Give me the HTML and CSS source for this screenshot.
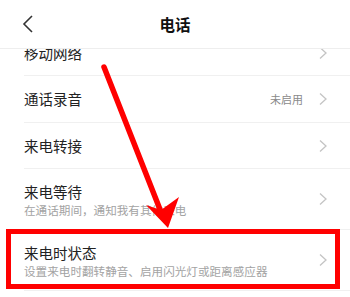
FILE: index.html
```html
<!DOCTYPE html>
<html lang="zh-CN">
<head>
<meta charset="utf-8">
<title>电话</title>
<link rel="stylesheet" href="styles.css">
</head>
<body>
<div class="screen">
  <header class="header">
    <svg class="back" width="12" height="18" viewBox="0 0 12 18"><polyline points="10,1 2,9 10,17" fill="none" stroke="#333" stroke-width="1.6"/></svg>
    <h1 class="title">电话</h1>
  </header>
  <div class="viewport">
    <ul class="list">
      <li class="row">
        <div class="text"><div class="label">移动网络</div></div>
        <svg class="chev" width="8" height="12" viewBox="0 0 8 12"><polyline points="1,0.5 7,6 1,11.5" fill="none" stroke="#c4c4c4" stroke-width="1.3"/></svg>
      </li>
      <li class="row row-mid">
        <div class="text"><div class="label">通话录音</div></div>
        <span class="value">未启用</span>
        <svg class="chev" width="8" height="12" viewBox="0 0 8 12"><polyline points="1,0.5 7,6 1,11.5" fill="none" stroke="#c4c4c4" stroke-width="1.3"/></svg>
      </li>
      <li class="row">
        <div class="text"><div class="label">来电转接</div></div>
        <svg class="chev" width="8" height="12" viewBox="0 0 8 12"><polyline points="1,0.5 7,6 1,11.5" fill="none" stroke="#c4c4c4" stroke-width="1.3"/></svg>
      </li>
      <li class="row row-tall">
        <div class="text"><div class="label">来电等待</div><div class="sub">在通话期间，通知我有其他来电</div></div>
        <svg class="chev" width="8" height="12" viewBox="0 0 8 12"><polyline points="1,0.5 7,6 1,11.5" fill="none" stroke="#c4c4c4" stroke-width="1.3"/></svg>
      </li>
      <li class="row row-tall">
        <div class="text"><div class="label">来电时状态</div><div class="sub">设置来电时翻转静音、启用闪光灯或距离感应器</div></div>
        <svg class="chev" width="8" height="12" viewBox="0 0 8 12"><polyline points="1,0.5 7,6 1,11.5" fill="none" stroke="#c4c4c4" stroke-width="1.3"/></svg>
      </li>
    </ul>
  </div>
  <div class="highlight"></div>
  <svg class="arrow" width="350" height="297" viewBox="0 0 350 297">
    <line x1="104" y1="67" x2="161" y2="212" stroke="#ff0000" stroke-width="5.5" stroke-linecap="round"/>
    <polygon points="168,228 146,205 161,210 179,197" fill="#ff0000"/>
  </svg>
</div>
</body>
</html>
```
FILE: styles.css
```css
* { box-sizing: border-box; }
html, body { margin: 0; padding: 0; background: #fff; }
body {
  font-family: "Noto Sans CJK SC", "Noto Sans", sans-serif;
  color: #222;
}
.screen {
  position: relative;
  width: 350px;
  height: 297px;
  overflow: hidden;
  background: #fff;
}
.header {
  height: 49px;
  border-bottom: 1px solid #eeeeee;
  display: flex;
  align-items: center;
  justify-content: center;
  position: relative;
}
.back {
  position: absolute;
  left: 22px;
  top: 15px;
}
.title {
  margin: 0;
  font-size: 15.5px;
  font-weight: 700;
  line-height: 20px;
  color: #111;
}
.viewport {
  overflow: hidden;
  height: 248px;
}
.list {
  list-style: none;
  margin: -19px 0 0 0;
  padding: 0;
}
.row {
  display: flex;
  align-items: center;
  height: 46px;
  margin-left: 24px;
  padding-right: 23px;
  border-bottom: 1px solid #f0f0f0;
}
.row-mid { height: 47px; }
.row-tall { height: 61px; }
.text {
  flex: 1;
  display: flex;
  flex-direction: column;
}
.row-tall .text { padding-top: 2px; }
.label {
  font-size: 14.5px;
  line-height: 20px;
  color: #222;
}
.sub {
  font-size: 11.6px;
  line-height: 16px;
  color: #a3a3a3;
}
.value {
  font-size: 11px;
  color: #8a8a8a;
  margin-right: 16px;
}
.chev { flex: none; }
.highlight {
  position: absolute;
  left: 6px;
  top: 229px;
  width: 334px;
  height: 60px;
  border: 5px solid #ff0000;
}
.arrow {
  position: absolute;
  left: 0;
  top: 0;
}
```
